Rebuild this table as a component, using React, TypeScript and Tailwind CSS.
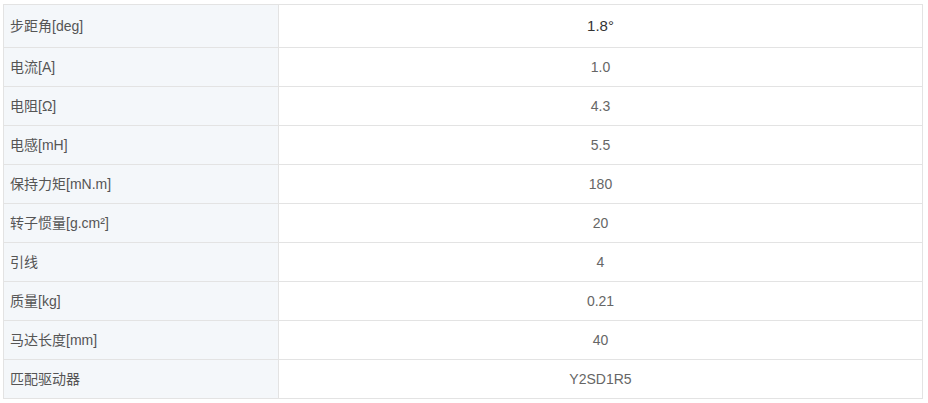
import React from "react";

const rows: [string, React.ReactNode][] = [
  ["步距角[deg]", "1.8°"],
  ["电流[A]", "1.0"],
  ["电阻[Ω]", "4.3"],
  ["电感[mH]", "5.5"],
  ["保持力矩[mN.m]", "180"],
  ["转子惯量[g.cm²]", "20"],
  ["引线", "4"],
  ["质量[kg]", "0.21"],
  ["马达长度[mm]", "40"],
  ["匹配驱动器", "Y2SD1R5"],
];

export default function App() {
  return (
    <div
      className="w-[928px] h-[403px] bg-white pt-[4px] pl-[3px]"
      style={{ fontFamily: '"Liberation Sans", Arial, "Noto Sans CJK SC", sans-serif' }}
    >
      <div className="w-[920px] border-t border-l border-r border-[#e3e3e3]">
        {rows.map(([k, v], i) => (
          <div
            key={k}
            className={`flex border-b border-[#e3e3e3] ${i === 0 ? "h-[43px]" : "h-[39px]"}`}
          >
            <div className="w-[275px] shrink-0 bg-[#f4f7fa] border-r border-[#e3e3e3] flex items-center pl-[6px] text-[14px] text-[#555]">
              {k}
            </div>
            <div
              className={`flex-1 flex items-center justify-center ${
                i === 0 ? "text-[15px] text-[#333]" : "text-[14px] text-[#666]"
              }`}
            >
              {v}
            </div>
          </div>
        ))}
      </div>
    </div>
  );
}
